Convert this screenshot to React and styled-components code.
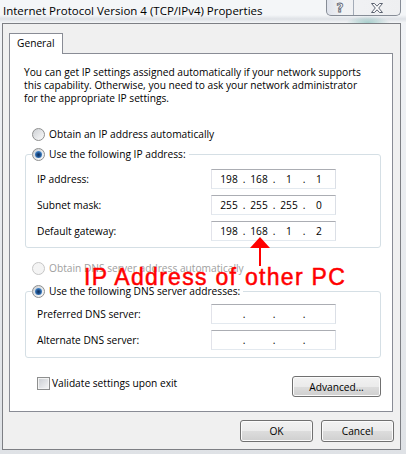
import styled, { createGlobalStyle } from 'styled-components';

const GlobalStyle = createGlobalStyle`
  html, body {
    margin: 0;
    padding: 0;
  }
  body {
    width: 406px;
    height: 454px;
    overflow: hidden;
    background: linear-gradient(#f2f4f7, #dfe2e6);
    font-family: "Open Sans", "Noto Sans", sans-serif;
    font-size: 10.2px;
    color: #000;
  }
`

const ipRows = [
  { label: 'IP address:', value: ['198', '168', '1', '1'] },
  { label: 'Subnet mask:', value: ['255', '255', '255', '0'] },
  { label: 'Default gateway:', value: ['198', '168', '1', '2'] },
]

const dnsRows = [
  { label: 'Preferred DNS server:', value: ['', '', '', ''] },
  { label: 'Alternate DNS server:', value: ['', '', '', ''] },
]

function IpField({ value }) {
  return (
    <IpBox>
      {value.map((part, i) => (
        <>
          <IpPart key={'p' + i}>{part}</IpPart>
          {i < 3 && <IpDot key={'d' + i}>.</IpDot>}
        </>
      ))}
    </IpBox>
  )
}

function FieldList({ rows }) {
  return rows.map(row => (
    <FieldRow key={row.label}>
      <FieldLabel>{row.label}</FieldLabel>
      <IpField value={row.value} />
    </FieldRow>
  ))
}

function App() {
  return (
    <>
      <GlobalStyle />
      <TitleBar>
        <Title>Internet Protocol Version 4 (TCP/IPv4) Properties</Title>
        <CaptionButtons>
          <CaptionButton $w={26}><HelpGlyph>?</HelpGlyph></CaptionButton>
          <CaptionButton $w={46}>
            <svg width="14" height="10" viewBox="0 0 14 10">
              <path
                d="M1.5 0.5 H4.5 L7 3.2 L9.5 0.5 H12.5 L8.7 5 L12.5 9.5 H9.5 L7 6.8 L4.5 9.5 H1.5 L5.3 5 Z"
                fill="#fdfdfd"
                stroke="#5b6270"
                strokeWidth="1"
                strokeLinejoin="round"
              />
            </svg>
          </CaptionButton>
        </CaptionButtons>
      </TitleBar>

      <Window>
        <Tab>General</Tab>
        <Panel>
          <Info>
            You can get IP settings assigned automatically if your network supports<br />
            this capability. Otherwise, you need to ask your network administrator<br />
            for the appropriate IP settings.
          </Info>

          <RadioRow $top={23}>
            <Radio />
            Obtain an IP address automatically
          </RadioRow>

          <GroupBox $top={7}>
            <Legend>
              <LegendInner>
                <Radio $checked />
                Use the following IP address:
              </LegendInner>
            </Legend>
            <GroupRows $pt={8} $pb={6}>
              <FieldList rows={ipRows} />
            </GroupRows>
          </GroupBox>

          <RadioRow $top={14} $disabled>
            <Radio $disabled />
            Obtain DNS server address automatically
          </RadioRow>

          <GroupBox $top={10}>
            <Legend>
              <LegendInner>
                <Radio $checked />
                Use the following DNS server addresses:
              </LegendInner>
            </Legend>
            <GroupRows $pt={6} $pb={7}>
              <FieldList rows={dnsRows} />
            </GroupRows>
          </GroupBox>

          <OptionsRow>
            <CheckLabel>
              <CheckBox />
              Validate settings upon exit
            </CheckLabel>
            <Button $w={89} $h={21}>Advanced...</Button>
          </OptionsRow>

          <Arrow width="20" height="29" viewBox="0 0 20 29">
            <polygon points="10,0 20,11 0,11" fill="#ff0000" />
            <rect x="9" y="11" width="2" height="18" fill="#ff0000" />
          </Arrow>
          <Note>IP Address of other PC</Note>
        </Panel>

        <DialogButtons>
          <Button $w={73} $h={22}>OK</Button>
          <Button $w={73} $h={22}>Cancel</Button>
        </DialogButtons>
      </Window>
    </>
  )
}

const TitleBar = styled.div`
  display: flex;
  justify-content: space-between;
  align-items: flex-start;
  height: 23px;
  padding: 0 5px 0 3px;
  background:
    radial-gradient(ellipse 22px 7px at 368px 23px, rgba(70, 160, 150, 0.45), transparent),
    linear-gradient(to bottom, transparent 15px, rgba(180, 186, 196, 0.35) 19px, transparent 23px),
    #f4f6f8;
`

const Title = styled.div`
  font-size: 11.5px;
  line-height: 22px;
  white-space: nowrap;
`

const CaptionButtons = styled.div`
  display: flex;
  height: 16px;
  box-sizing: border-box;
  border: 1px solid #868c96;
  border-top: none;
  border-radius: 0 0 5px 5px;
  overflow: hidden;
  background: linear-gradient(90deg, #dfe3ec, #f1f2f4 20%, #eeeff1);
`

const CaptionButton = styled.div`
  width: ${props => props.$w}px;
  display: flex;
  align-items: center;
  justify-content: center;

  & + & {
    border-left: 1px solid #a3abb7;
  }
`

const HelpGlyph = styled.span`
  font-family: "DejaVu Sans", sans-serif;
  font-size: 12px;
  font-weight: 700;
  line-height: 14px;
  color: #fdfdfd;
  -webkit-text-stroke: 0.8px #5b6270;
`

const Window = styled.div`
  margin-left: 2px;
  width: 399px;
  height: 427px;
  box-sizing: border-box;
  border: 1px solid #7d7f84;
  background: #f0f0f0;
  padding: 9px 6px 0 6px;
`

const Tab = styled.div`
  position: relative;
  z-index: 1;
  width: 54px;
  height: 21px;
  box-sizing: border-box;
  border: 1px solid #898c95;
  border-bottom: none;
  margin-bottom: -1px;
  background: #fff;
  padding-left: 7px;
  line-height: 19px;
`

const Panel = styled.div`
  position: relative;
  width: 384px;
  height: 359px;
  box-sizing: border-box;
  border: 1px solid #898c95;
  background: #fff;
  padding: 12px 11px 0 15px;
`

const Info = styled.p`
  margin: 0 0 0 -1px;
  line-height: 13px;
  white-space: nowrap;
`

const RadioRow = styled.div`
  display: flex;
  align-items: center;
  height: 13px;
  line-height: 13px;
  margin: ${props => props.$top}px 0 0 7px;
  color: ${props => props.$disabled ? '#a0a0a0' : '#000'};
`

const Radio = styled.span`
  flex: none;
  width: 13px;
  height: 13px;
  box-sizing: border-box;
  margin-right: 4px;
  border-radius: 50%;
  border: 1px solid ${props => props.$disabled ? '#c6c6c6' : '#8e8f8f'};
  background: ${props => props.$disabled
    ? '#f4f4f4'
    : 'linear-gradient(135deg, #cdd0d4, #fbfbfb)'};
  display: flex;
  align-items: center;
  justify-content: center;

  &::after {
    content: '';
    display: ${props => props.$checked ? 'block' : 'none'};
    width: 7px;
    height: 7px;
    border-radius: 50%;
    background: radial-gradient(circle at 50% 55%, #0d2c56 0, #1d4f8b 35%, #4d8fd2 72%, #b4dbf7 100%);
  }
`

const GroupBox = styled.fieldset`
  margin: ${props => props.$top}px 0 0 0;
  padding: 0;
  min-width: 0;
  border: 1px solid #d5dfe5;
  border-radius: 3px;
`

const Legend = styled.legend`
  margin-left: 6px;
  padding: 0 3px 0 0;
  line-height: 13px;
`

const LegendInner = styled.span`
  display: flex;
  align-items: center;
  height: 13px;
`

const GroupRows = styled.div`
  display: flex;
  flex-direction: column;
  gap: 6px;
  padding: ${props => props.$pt}px 0 ${props => props.$pb}px 11px;
`

const FieldRow = styled.div`
  display: flex;
  align-items: center;
  height: 20px;
`

const FieldLabel = styled.span`
  width: 174px;
`

const IpBox = styled.div`
  display: grid;
  grid-template-columns: 24px 6px 24px 6px 24px 6px 24px;
  align-items: center;
  width: 125px;
  height: 20px;
  box-sizing: border-box;
  padding-left: 5px;
  border: 1px solid;
  border-color: #abadb3 #dbdfe6 #e3e9ef #e2e3ea;
  background: #fff;
  line-height: 18px;
`

const IpPart = styled.span`
  text-align: center;
`

const IpDot = styled.span`
  text-align: center;
`

const OptionsRow = styled.div`
  display: flex;
  justify-content: space-between;
  align-items: flex-start;
  margin-top: 18px;
`

const CheckLabel = styled.div`
  display: flex;
  align-items: center;
  gap: 2px;
  margin: 1px 0 0 12px;
  line-height: 13px;
`

const CheckBox = styled.span`
  width: 13px;
  height: 13px;
  box-sizing: border-box;
  border: 1px solid #8e8f8f;
  background: linear-gradient(135deg, #c9ccd1, #f7f7f7);
  box-shadow: inset 0 0 0 1px #f4f4f4;
`

const Button = styled.div`
  display: flex;
  align-items: center;
  justify-content: center;
  width: ${props => props.$w}px;
  height: ${props => props.$h}px;
  box-sizing: border-box;
  border: 1px solid #707070;
  border-radius: 3px;
  background: linear-gradient(#f2f2f2 0%, #ebebeb 50%, #dddddd 50%, #cfcfcf 100%);
  box-shadow: inset 0 0 0 1px #fbfbfb;
`

const DialogButtons = styled.div`
  display: flex;
  justify-content: flex-end;
  gap: 8px;
  margin-top: 8px;
`

const Arrow = styled.svg`
  position: absolute;
  left: 240px;
  top: 183px;
`

const Note = styled.div`
  position: absolute;
  left: 74px;
  top: 212px;
  font-family: "Liberation Sans", Arial, sans-serif;
  font-size: 23px;
  line-height: 23px;
  letter-spacing: 1.3px;
  color: #ff0000;
  -webkit-text-stroke: 0.5px #ff0000;
  white-space: nowrap;
`

export default App
